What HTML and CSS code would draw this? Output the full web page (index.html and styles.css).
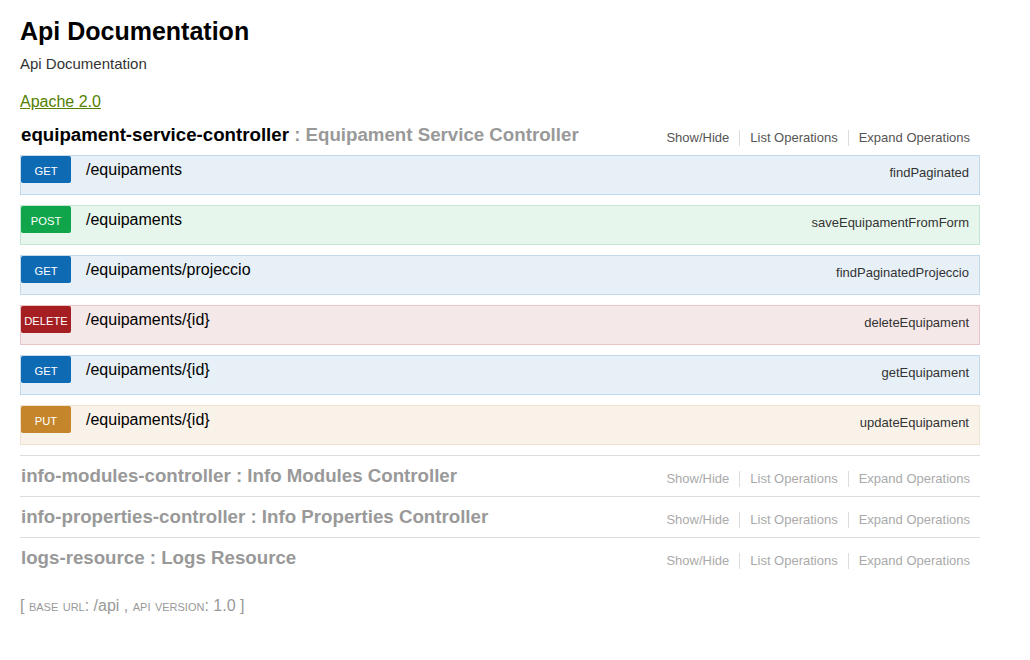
FILE: index.html
```html
<!DOCTYPE html>
<html>
<head>
<meta charset="utf-8">
<title>Api Documentation</title>
<link rel="stylesheet" href="styles.css">
</head>
<body>
<div class="page">
  <div class="info">
    <h1 class="info-title">Api Documentation</h1>
    <div class="info-desc">Api Documentation</div>
    <div class="info-license"><a href="#">Apache 2.0</a></div>
  </div>
  <ul class="resources">
    <li class="resource active">
      <div class="res-heading">
        <h2><a class="res-name" href="#">equipament-service-controller</a><span class="res-desc"> : Equipament Service Controller</span></h2>
        <ul class="options">
          <li>Show/Hide</li>
          <li>List Operations</li>
          <li>Expand Operations</li>
        </ul>
      </div>
      <ul class="operations">
        <li class="op get"><span class="method">GET</span><span class="path">/equipaments</span><span class="nick">findPaginated</span></li>
        <li class="op post"><span class="method">POST</span><span class="path">/equipaments</span><span class="nick">saveEquipamentFromForm</span></li>
        <li class="op get"><span class="method">GET</span><span class="path">/equipaments/projeccio</span><span class="nick">findPaginatedProjeccio</span></li>
        <li class="op delete"><span class="method">DELETE</span><span class="path">/equipaments/{id}</span><span class="nick">deleteEquipament</span></li>
        <li class="op get"><span class="method">GET</span><span class="path">/equipaments/{id}</span><span class="nick">getEquipament</span></li>
        <li class="op put"><span class="method">PUT</span><span class="path">/equipaments/{id}</span><span class="nick">updateEquipament</span></li>
      </ul>
    </li>
    <li class="resource">
      <div class="res-heading">
        <h2><a class="res-name" href="#">info-modules-controller</a><span class="res-desc"> : Info Modules Controller</span></h2>
        <ul class="options">
          <li>Show/Hide</li>
          <li>List Operations</li>
          <li>Expand Operations</li>
        </ul>
      </div>
    </li>
    <li class="resource">
      <div class="res-heading">
        <h2><a class="res-name" href="#">info-properties-controller</a><span class="res-desc"> : Info Properties Controller</span></h2>
        <ul class="options">
          <li>Show/Hide</li>
          <li>List Operations</li>
          <li>Expand Operations</li>
        </ul>
      </div>
    </li>
    <li class="resource">
      <div class="res-heading">
        <h2><a class="res-name" href="#">logs-resource</a><span class="res-desc"> : Logs Resource</span></h2>
        <ul class="options">
          <li>Show/Hide</li>
          <li>List Operations</li>
          <li>Expand Operations</li>
        </ul>
      </div>
    </li>
  </ul>
  <div class="footer">[ <span class="sc">base url</span>: /api , <span class="sc">api version</span>: 1.0 ]</div>
</div>
</body>
</html>
```

FILE: styles.css
```css
body {
  margin: 0;
  background: #fff;
  color: #000;
  font-family: "Liberation Sans", Arial, sans-serif;
}

.page {
  width: 960px;
  padding: 0 20px;
}

.info-title {
  margin: 16px 0 0;
  font-size: 25px;
  line-height: 30px;
  font-weight: bold;
}

.info-desc {
  margin-top: 8px;
  font-size: 15px;
  line-height: 20px;
  color: #333;
}

.info-license {
  margin-top: 18px;
  font-size: 16px;
  line-height: 20px;
}

.info-license a {
  color: #547f00;
  text-decoration: underline;
}

.resources {
  list-style: none;
  margin: 3px 0 0;
  padding: 0;
}

.resource {
  border-bottom: 1px solid #ddd;
}

.resource:last-child {
  border-bottom: none;
}

.res-heading {
  display: flex;
  justify-content: space-between;
  height: 40px;
}

.res-heading h2 {
  margin: 0;
  padding: 1px 0 0 1px;
  font-size: 18.7px;
  line-height: 37px;
  font-weight: bold;
  color: #999;
}

.res-name {
  color: #999;
  text-decoration: none;
}

.active .res-name {
  color: #000;
}

.options {
  list-style: none;
  margin: 15px 0 0;
  padding: 0;
  display: flex;
  align-self: flex-start;
  font-size: 13px;
  line-height: 16px;
  color: #aaa;
}

.active .options {
  color: #555;
}

.options li {
  padding: 0 10px;
  border-right: 1px solid #ddd;
}

.options li:last-child {
  border-right: none;
}

.operations {
  list-style: none;
  margin: 0;
  padding: 0 0 10px;
  display: flex;
  flex-direction: column;
  gap: 10px;
}

.op {
  display: flex;
  align-items: baseline;
  height: 38px;
  border: 1px solid;
}

.method {
  width: 50px;
  text-align: center;
  color: #fff;
  font-size: 11.2px;
  line-height: 16px;
  padding: 7px 0 4px;
  border-radius: 2px;
}

.path {
  margin-left: 15px;
  font-size: 16px;
  line-height: 20px;
}

.nick {
  margin-left: auto;
  margin-right: 10px;
  margin-top: 9px;
  align-self: flex-start;
  font-size: 13px;
  line-height: 15px;
  color: #333;
}

.get { background: #e7f0f7; border-color: #c3d9ec; }
.get .method { background: #0f6ab4; }

.post { background: #e7f6ec; border-color: #c3e8d1; }
.post .method { background: #10a54a; }

.delete { background: #f5e8e8; border-color: #e8c6c7; }
.delete .method { background: #a41e22; }

.put { background: #f9f2e9; border-color: #f0e2d0; }
.put .method { background: #c5862b; }

.footer {
  margin-top: 18px;
  font-size: 16px;
  line-height: 20px;
  color: #999;
}

.sc {
  font-variant: small-caps;
}
```
